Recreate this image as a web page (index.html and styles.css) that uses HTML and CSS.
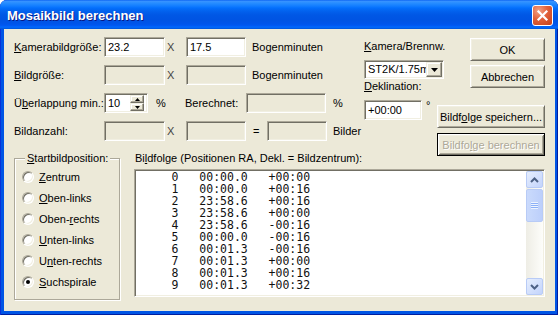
FILE: index.html
```html
<!DOCTYPE html>
<html lang="de">
<head>
    <meta charset="UTF-8">
    <meta name="viewport" content="width=device-width, initial-scale=1.0">
    <title>Mosaikbild berechnen</title>
    <link rel="stylesheet" href="styles.css">
</head>
<body>
    <div class="window">
        <div class="titlebar">
            <span class="title">Mosaikbild berechnen</span>
            <button class="close" title="Schließen">
                <svg width="13" height="13" viewBox="0 0 13 13"><path d="M2.5 2.5L10.5 10.5M10.5 2.5L2.5 10.5" stroke="#fff" stroke-width="2.2" stroke-linecap="square"/></svg>
            </button>
        </div>

        <div class="client">
            <div class="top">
                <div class="form">
                    <div class="row">
                        <label class="label"><u>K</u>amerabildgröße:</label>
                        <input class="edit size-a" value="23.2">
                        <span class="times">X</span>
                        <input class="edit size-b" value="17.5">
                        <span class="unit">Bogenminuten</span>
                    </div>
                    <div class="row">
                        <label class="label"><u>B</u>ildgröße:</label>
                        <input class="edit size-a" disabled>
                        <span class="times">X</span>
                        <input class="edit size-b" disabled>
                        <span class="unit">Bogenminuten</span>
                    </div>
                    <div class="row">
                        <label class="label">Ü<u>b</u>erlappung min.:</label>
                        <div class="spin">
                            <input class="spin-value" value="10">
                            <div class="spin-btns">
                                <button class="spin-btn"><svg width="5" height="3" viewBox="0 0 5 3"><path d="M2.5 0L5 3H0z" fill="#000"/></svg></button>
                                <button class="spin-btn"><svg width="5" height="3" viewBox="0 0 5 3"><path d="M0 0H5L2.5 3z" fill="#000"/></svg></button>
                            </div>
                        </div>
                        <span class="pct">%</span>
                        <span class="calc-label">Berechnet:</span>
                        <input class="edit size-c" disabled>
                        <span class="unit-pct">%</span>
                    </div>
                    <div class="row">
                        <label class="label">Bildanzahl:</label>
                        <input class="edit size-a" disabled>
                        <span class="times">X</span>
                        <input class="edit size-b" disabled>
                        <span class="eq">=</span>
                        <input class="edit size-b" disabled>
                        <span class="unit">Bilder</span>
                    </div>
                </div>

                <div class="camera">
                    <span class="caption"><u>K</u>amera/Brennw.</span>
                    <div class="combo">
                        <span class="combo-text">ST2K/1.75mm</span>
                        <button class="combo-btn"><svg width="7" height="4" viewBox="0 0 7 4"><path d="M0 0H7L3.5 4z" fill="#000"/></svg></button>
                    </div>
                    <span class="caption dekl-caption"><u>D</u>eklination:</span>
                    <div class="dekl">
                        <input class="edit size-d" value="+00:00">
                        <span class="degree">°</span>
                    </div>
                </div>

                <div class="actions">
                    <button class="btn btn-ok">OK</button>
                    <button class="btn btn-cancel">Abbrechen</button>
                    <button class="btn btn-wide btn-save">Bildf<u>o</u>lge speichern...</button>
                    <button class="btn btn-wide btn-default" disabled>Bildfo<u>l</u>ge berechnen</button>
                </div>
            </div>

            <div class="bottom">
                <fieldset class="group">
                    <legend><u>S</u>tartbildposition:</legend>
                    <div class="options">
                        <div class="radio"><span class="dot"></span><span><u>Z</u>entrum</span></div>
                        <div class="radio"><span class="dot"></span><span><u>O</u>ben-links</span></div>
                        <div class="radio"><span class="dot"></span><span>Oben-<u>r</u>echts</span></div>
                        <div class="radio"><span class="dot"></span><span><u>U</u>nten-links</span></div>
                        <div class="radio"><span class="dot"></span><span>U<u>n</u>ten-rechts</span></div>
                        <div class="radio"><span class="dot on"></span><span><u>S</u>uchspirale</span></div>
                    </div>
                </fieldset>

                <div class="sequence">
                    <span class="sequence-caption">Bi<u>l</u>dfolge (Positionen RA, Dekl. = Bildzentrum):</span>
                    <div class="listbox">
<pre class="list">     0   00:00.0   +00:00
     1   00:00.0   +00:16
     2   23:58.6   +00:16
     3   23:58.6   +00:00
     4   23:58.6   -00:16
     5   00:00.0   -00:16
     6   00:01.3   -00:16
     7   00:01.3   +00:00
     8   00:01.3   +00:16
     9   00:01.3   +00:32</pre>
                        <div class="scrollbar">
                            <div class="sb-btn"><svg width="9" height="6" viewBox="0 0 9 6"><path d="M1 5L4.5 1.5L8 5" fill="none" stroke="#4D6185" stroke-width="2"/></svg></div>
                            <div class="sb-thumb"><span class="grip"></span></div>
                            <div class="sb-btn sb-down"><svg width="9" height="6" viewBox="0 0 9 6"><path d="M1 1L4.5 4.5L8 1" fill="none" stroke="#4D6185" stroke-width="2"/></svg></div>
                        </div>
                    </div>
                </div>
            </div>
        </div>
    </div>
</body>
</html>
```

FILE: styles.css
```css
* {
    box-sizing: border-box;
}

body {
    margin: 0;
    background: #fff;
    font-family: "Liberation Sans", Arial, sans-serif;
    font-size: 11px;
    color: #000;
}

/* Fenster im XP-Stil */
.window {
    width: 558px;
    height: 315px;
    display: flex;
    flex-direction: column;
    background: #0055E5;
    border-radius: 7px 7px 0 0;
    overflow: hidden;
    box-shadow: inset 1px 0 #0831D9, inset -1px 0 #001EA0, inset 0 -1px #001EA0;
}

.titlebar {
    height: 29px;
    flex-shrink: 0;
    display: flex;
    align-items: center;
    padding: 1px 5px 0 7px;
    background: linear-gradient(#0058EE 0, #3A93FF 1px, #288EFF 3px, #127DFF 6px, #036FFC 8px, #0262EE 11px, #0057E5 15px, #0054E3 20px, #0055EB 24px, #005BF5 26px, #026AFE 27px, #0062EF 28px, #0052D6 29px);
}

.title {
    flex: 1;
    color: #fff;
    font-weight: bold;
    font-size: 13px;
    text-shadow: 1px 1px #0A1883;
}

.close {
    width: 21px;
    height: 21px;
    padding: 0;
    border: 1px solid #fff;
    border-radius: 3px;
    background: radial-gradient(circle at 30% 25%, #F2A286 0, #E2613A 45%, #C4401A 100%);
    display: flex;
    align-items: center;
    justify-content: center;
}

.client {
    flex: 1;
    margin: 0 3px 4px 4px;
    background: #ECE9D8;
    padding: 8px 10px 0 10px;
}

/* obere Zeilen */
.top {
    display: flex;
}

.form {
    width: 350px;
    display: flex;
    flex-direction: column;
    gap: 8px;
}

.row {
    display: flex;
    align-items: center;
    height: 20px;
}

.label {
    width: 90px;
}

.edit {
    height: 20px;
    padding: 0 3px;
    font: inherit;
    color: #000;
    background: #fff;
    border: 1px solid;
    border-color: #ACA899 #fff #fff #ACA899;
    box-shadow: inset 1px 1px #716F64, inset -1px -1px #F1EFE2;
    outline: none;
}

.edit:disabled {
    background: #ECE9D8;
}

.size-a { width: 61px; }
.size-b { width: 60px; }
.size-c { width: 80px; }
.size-d { width: 58px; }

.times {
    width: 21px;
    padding-left: 2px;
    color: #444;
}

.unit {
    margin-left: 6px;
}

.pct {
    width: 29px;
    margin-left: 8px;
}

.calc-label {
    width: 61px;
}

.unit-pct {
    margin-left: 7px;
}

.eq {
    width: 21px;
    padding-left: 7px;
}

.spin {
    width: 44px;
    height: 20px;
    display: flex;
    padding: 1px;
    background: #fff;
    border: 1px solid;
    border-color: #ACA899 #fff #fff #ACA899;
    box-shadow: inset 1px 1px #716F64, inset -1px -1px #F1EFE2;
}

.spin-value {
    width: 24px;
    border: 0;
    padding: 0 0 0 2px;
    font: inherit;
    outline: none;
    background: transparent;
}

.spin-btns {
    width: 14px;
    display: flex;
    flex-direction: column;
}

.spin-btn, .combo-btn {
    flex: 1;
    padding: 0;
    display: flex;
    align-items: center;
    justify-content: center;
    background: #ECE9D8;
    border: 1px solid;
    border-color: #F1EFE2 #716F64 #716F64 #F1EFE2;
    box-shadow: inset -1px -1px #ACA899, inset 1px 1px #fff;
}

/* Kamera-Spalte */
.camera {
    width: 73px;
    display: flex;
    flex-direction: column;
    align-items: flex-start;
    padding-top: 3px;
}

.caption {
    line-height: 13px;
}

.combo {
    margin-top: 7px;
    width: 80px;
    height: 19px;
    flex-shrink: 0;
    display: flex;
    padding: 1px;
    background: #fff;
    border: 1px solid;
    border-color: #ACA899 #fff #fff #ACA899;
    box-shadow: inset 1px 1px #716F64, inset -1px -1px #F1EFE2;
}

.combo-text {
    flex: 1;
    overflow: hidden;
    white-space: nowrap;
    padding-left: 2px;
    line-height: 15px;
}

.combo-btn {
    flex: none;
    width: 16px;
    height: 15px;
}

.dekl-caption {
    margin-top: 1px;
}

.dekl {
    margin-top: 7px;
    display: flex;
    align-items: flex-start;
}

.degree {
    margin-left: 4px;
    line-height: 10px;
}

/* Knöpfe */
.actions {
    flex: 1;
    display: flex;
    flex-direction: column;
    align-items: flex-end;
}

.btn {
    height: 23px;
    padding: 0;
    font: inherit;
    color: #000;
    background: #ECE9D8;
    border: 1px solid;
    border-color: #fff #716F64 #716F64 #fff;
    box-shadow: inset 1px 1px #F1EFE2, inset -1px -1px #ACA899;
}

.btn:disabled {
    color: #ACA899;
    text-shadow: 1px 1px #fff;
}

.btn-default {
    border-color: #000;
    box-shadow: inset 1px 1px #fff, inset -1px -1px #716F64, inset 2px 2px #F1EFE2, inset -2px -2px #ACA899;
}

.btn-ok {
    width: 75px;
    margin-top: 1px;
}

.btn-cancel {
    width: 75px;
    margin-top: 4px;
}

.btn-wide {
    width: 108px;
    margin-top: 5px;
}

.btn-save {
    margin-top: 17px;
}

/* unterer Bereich */
.bottom {
    display: flex;
    margin-top: -4px;
}

.group {
    margin: 0;
    padding: 0 0 0 7px;
    width: 106px;
    height: 148px;
    min-width: 0;
    border: 1px solid #ACA899;
    box-shadow: inset 1px 1px #fff, 1px 1px #fff;
}

.group legend {
    margin-left: 3px;
    padding: 0 2px;
    line-height: 13px;
    background: #ECE9D8;
}

.options {
    display: flex;
    flex-direction: column;
    padding-top: 1px;
}

.radio {
    height: 21px;
    display: flex;
    align-items: center;
    gap: 5px;
}

.dot {
    width: 12px;
    height: 12px;
    display: flex;
    align-items: center;
    justify-content: center;
    border-radius: 50%;
    background: #fff;
    border: 1px solid;
    border-color: #ACA899 #fff #fff #ACA899;
    box-shadow: inset 1px 1px #716F64, inset -1px -1px #F1EFE2;
}

.dot.on::after {
    content: "";
    width: 4px;
    height: 4px;
    border-radius: 50%;
    background: #000;
}

.sequence {
    margin-left: 14px;
    width: 411px;
    display: flex;
    flex-direction: column;
}

.sequence-caption {
    line-height: 13px;
    padding-left: 1px;
}

.listbox {
    margin-top: 4px;
    height: 128px;
    display: flex;
    padding: 1px;
    background: #fff;
    border: 1px solid;
    border-color: #ACA899 #fff #fff #ACA899;
    box-shadow: inset 1px 1px #716F64, inset -1px -1px #F1EFE2;
}

.list {
    flex: 1;
    margin: 0;
    padding-left: 1px;
    font-family: "DejaVu Sans Mono", "Liberation Mono", monospace;
    font-size: 11.5px;
    line-height: 12px;
    color: #111;
}

/* Bildlaufleiste im XP-Stil */
.scrollbar {
    width: 17px;
    display: flex;
    flex-direction: column;
    background: linear-gradient(to right, #EEEDE5, #FDFDFA);
}

.sb-btn {
    height: 17px;
    display: flex;
    align-items: center;
    justify-content: center;
    border: 1px solid #B8CBF6;
    border-radius: 2px;
    background: linear-gradient(135deg, #E6EEFD, #C3D4FC);
}

.sb-thumb {
    margin-top: 1px;
    height: 33px;
    display: flex;
    align-items: center;
    justify-content: center;
    border: 1px solid #B8CBF6;
    border-radius: 2px;
    background: linear-gradient(to right, #CADAFC, #BCCFFB);
}

.grip {
    width: 7px;
    height: 7px;
    background: repeating-linear-gradient(#EEF4FE 0, #EEF4FE 1px, #8CB0F8 1px, #8CB0F8 2px);
}

.sb-down {
    margin-top: auto;
}
```
